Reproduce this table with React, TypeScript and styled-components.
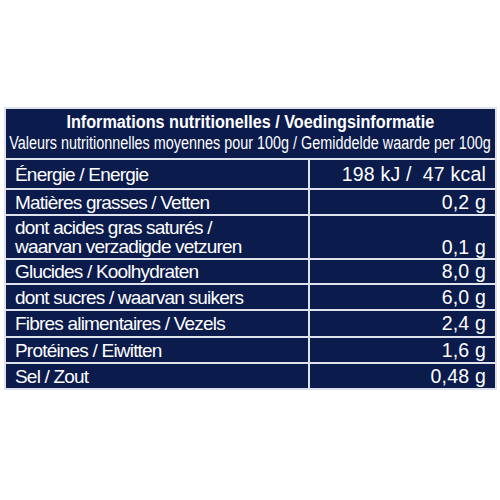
import styled, { createGlobalStyle } from "styled-components";

const GlobalStyle = createGlobalStyle`
    html, body {
        margin: 0;
        padding: 0;
        background: #ffffff;
        overflow: hidden;
    }
`;

const Page = styled.div`
    width: 500px;
    height: 500px;
    padding: 107px 3px 0 4px;
    box-sizing: border-box;
`;

const Panel = styled.div`
    background: #0b1b4c;
    border: 2px solid #dde2ec;
    color: #ffffff;
    font-family: "Liberation Sans", Arial, sans-serif;
`;

const Header = styled.div`
    height: 46px;
    padding-top: 3px;
    display: flex;
    flex-direction: column;
    align-items: center;
    overflow: hidden;
    border-bottom: 2px solid #dde2ec;
`;

const Title = styled.div`
    font-weight: 700;
    font-size: 18px;
    line-height: 21px;
    white-space: nowrap;
    transform: scaleX(0.9);
`;

const Subtitle = styled.div`
    font-size: 18px;
    line-height: 20px;
    white-space: nowrap;
    transform: scaleX(0.8);
`;

const Row = styled.div<{ $h: number; $last?: boolean }>`
    height: ${(p) => p.$h}px;
    display: grid;
    grid-template-columns: 1fr 185px;
    border-bottom: ${(p) => (p.$last ? "none" : "2px solid #dde2ec")};
`;

const Label = styled.div`
    display: flex;
    align-items: center;
    padding-left: 9px;
    font-size: 19px;
    line-height: 19px;
    letter-spacing: -0.8px;
    white-space: pre;
    border-right: 2px solid #dde2ec;
`;

const Value = styled.div<{ $bottom?: boolean }>`
    display: flex;
    align-items: ${(p) => (p.$bottom ? "flex-end" : "center")};
    justify-content: flex-end;
    padding: 0 9px ${(p) => (p.$bottom ? "1px" : "0")} 0;
    font-size: 19.5px;
    line-height: 19px;
    letter-spacing: 0.2px;
    white-space: pre;
`;

const rows = [
    { label: "Énergie / Energie", value: "198 kJ /  47 kcal", h: 28 },
    { label: "Matières grasses / Vetten", value: "0,2 g", h: 24 },
    { label: "dont acides gras saturés /\nwaarvan verzadigde vetzuren", value: "0,1 g", h: 42 },
    { label: "Glucides / Koolhydraten", value: "8,0 g", h: 23 },
    { label: "dont sucres / waarvan suikers", value: "6,0 g", h: 24 },
    { label: "Fibres alimentaires / Vezels", value: "2,4 g", h: 25 },
    { label: "Protéines / Eiwitten", value: "1,6 g", h: 24 },
    { label: "Sel / Zout", value: "0,48 g", h: 24 },
];

export default function App() {
    return (
        <>
            <GlobalStyle />
            <Page>
                <Panel>
                    <Header>
                        <Title>Informations nutritionelles / Voedingsinformatie</Title>
                        <Subtitle>
                            Valeurs nutritionnelles moyennes pour 100g / Gemiddelde waarde per 100g
                        </Subtitle>
                    </Header>
                    {rows.map((row, i) => (
                        <Row key={i} $h={row.h} $last={i === rows.length - 1}>
                            <Label>{row.label}</Label>
                            <Value $bottom={row.label.includes("\n")}>{row.value}</Value>
                        </Row>
                    ))}
                </Panel>
            </Page>
        </>
    );
}
